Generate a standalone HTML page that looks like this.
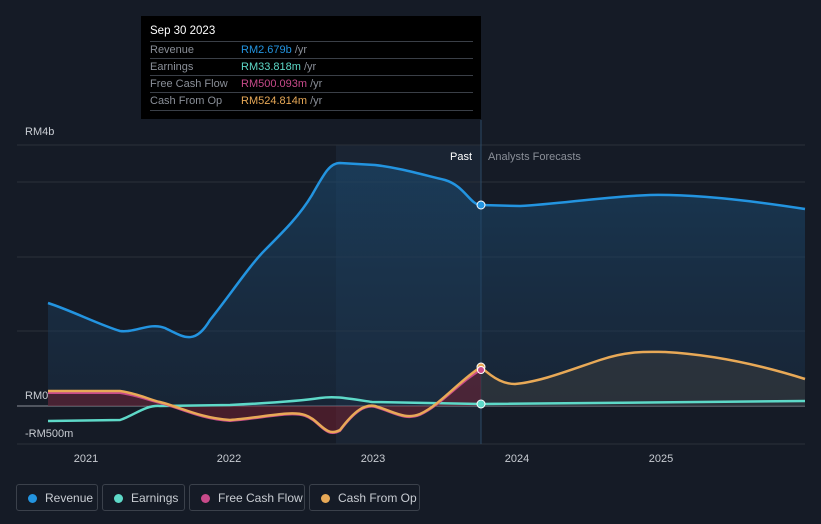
<!DOCTYPE html><html><head><style>
body{margin:0;width:821px;height:524px;background:#151b26;font-family:"Liberation Sans",sans-serif;overflow:hidden;position:relative}
.tt{position:absolute;left:141px;top:16px;width:340px;height:103px;background:#000;color:#fff;font-size:11px}
.tt .h{position:absolute;left:9px;top:9px;font-size:11.5px}
.row{position:absolute;left:9px;width:323px;height:17px;border-top:1px solid #3a3f47;line-height:17px;color:#8a8f98}
.row span{position:absolute;left:91px}
.lg{position:absolute;top:484px;height:27px;border:1px solid #3b414b;border-radius:3px;color:#c8ccd2;font-size:12px;line-height:27px;box-sizing:border-box}
.lg i{position:absolute;left:11px;top:9px;width:9px;height:9px;border-radius:50%}
.lg b{font-weight:normal;position:absolute;left:28px}
</style></head><body>
<svg width="821" height="524" style="position:absolute;left:0;top:0">
<defs><linearGradient id="g" x1="0" y1="0" x2="0" y2="1"><stop offset="0" stop-color="#1b4a70" stop-opacity=".8"/><stop offset="1" stop-color="#1b3550" stop-opacity=".5"/></linearGradient></defs>
<rect x="336" y="145" width="145" height="299" fill="#1a2433"/>
<g stroke="#2a303a" stroke-width="1"><line x1="17" y1="145" x2="805" y2="145"/><line x1="17" y1="182" x2="805" y2="182"/><line x1="17" y1="257" x2="805" y2="257"/><line x1="17" y1="331" x2="805" y2="331"/><line x1="17" y1="444" x2="805" y2="444"/></g>
<line x1="17" y1="406" x2="805" y2="406" stroke="#8a8f98"/>
<line x1="481" y1="120" x2="481" y2="444" stroke="#2c4a66"/>
<path d="M48,303 C70,310 100,325 120,331 C135,333 150,322 165,328 C185,338 195,345 210,320 C230,295 250,265 265,250 C285,230 300,215 312,195 C325,172 330,163 340,163 L375,165 C400,168 420,174 445,180 C465,186 470,205 481,205 L520,206 C560,204 600,197 650,195 C700,194 760,202 805,209 L805,406 L48,406Z" fill="url(#g)" opacity=".75"/>
<path d="M48,303 C70,310 100,325 120,331 C135,333 150,322 165,328 C185,338 195,345 210,320 C230,295 250,265 265,250 C285,230 300,215 312,195 C325,172 330,163 340,163 L375,165 C400,168 420,174 445,180 C465,186 470,205 481,205 L520,206 C560,204 600,197 650,195 C700,194 760,202 805,209" fill="none" stroke="#2394e0" stroke-width="2.5"/>
<path d="M481,367 C495,380 505,384 515,384 C540,382 570,370 600,360 C630,350 650,352 665,352 C720,355 770,368 805,379 L805,406 L481,406Z" fill="#3a3c3e" opacity=".55"/>
<path d="M48,391 L120,391 C140,394 150,400 160,402 C180,407 200,418 230,420 C260,418 290,410 305,415 C320,420 325,438 340,430 C355,410 365,404 375,406 C395,412 405,420 420,414 C440,405 460,380 481,367 L481,406 L48,406Z" fill="#7a2030" opacity=".5"/>
<path d="M48,421 L120,420 C135,415 145,405 160,406 L230,405 C270,403 300,401 320,398 C335,396 345,398 372,402 L481,404 L805,401" fill="none" stroke="#5ed9c8" stroke-width="2.5"/>
<path d="M48,393 L120,393 C140,396 150,401 160,403 C180,408 200,419 230,421 C260,419 290,411 305,416 C320,421 325,439 340,431 C355,411 365,405 375,407 C395,413 405,421 420,415 C440,406 460,382 481,370" fill="none" stroke="#c84a8a" stroke-width="2"/>
<path d="M48,391 L120,391 C140,394 150,400 160,402 C180,407 200,418 230,420 C260,418 290,410 305,415 C320,420 325,438 340,430 C355,410 365,404 375,406 C395,412 405,420 420,414 C440,405 460,380 481,367 C495,380 505,384 515,384 C540,382 570,370 600,360 C630,350 650,352 665,352 C720,355 770,368 805,379" fill="none" stroke="#e8a957" stroke-width="2.5"/>
<circle cx="481" cy="205" r="4" fill="#2394e0" stroke="#fff" stroke-width="1"/>
<circle cx="481" cy="367" r="4" fill="#e8a957" stroke="#fff" stroke-width="1"/>
<circle cx="481" cy="370" r="3.5" fill="#c84a8a" stroke="#fff" stroke-width="1"/>
<circle cx="481" cy="404" r="4" fill="#5ed9c8" stroke="#fff" stroke-width="1"/>
<g font-size="11" fill="#c8ccd2"><text x="25" y="135">RM4b</text><text x="25" y="399">RM0</text><text x="25" y="437">-RM500m</text>
<text x="86" y="462" text-anchor="middle">2021</text><text x="229" y="462" text-anchor="middle">2022</text><text x="373" y="462" text-anchor="middle">2023</text><text x="517" y="462" text-anchor="middle">2024</text><text x="661" y="462" text-anchor="middle">2025</text>
<text x="472" y="160" text-anchor="end" fill="#fff">Past</text><text x="488" y="160" fill="#8a8f98">Analysts Forecasts</text></g>
</svg>
<div class="tt"><div class="h">Sep 30 2023</div>
<div class="row" style="top:25px">Revenue<span style="color:#2394e0">RM2.679b <span style="position:static;color:#8a8f98">/yr</span></span></div>
<div class="row" style="top:42px">Earnings<span style="color:#5ed9c8">RM33.818m <span style="position:static;color:#8a8f98">/yr</span></span></div>
<div class="row" style="top:59px">Free Cash Flow<span style="color:#c84a8a">RM500.093m <span style="position:static;color:#8a8f98">/yr</span></span></div>
<div class="row" style="top:76px">Cash From Op<span style="color:#e8a957">RM524.814m <span style="position:static;color:#8a8f98">/yr</span></span></div>
<div class="row" style="top:94px;height:0"></div>
</div>
<div class="lg" style="left:16px;width:82px"><i style="background:#2394e0"></i><b>Revenue</b></div>
<div class="lg" style="left:102px;width:83px"><i style="background:#5ed9c8"></i><b>Earnings</b></div>
<div class="lg" style="left:189px;width:116px"><i style="background:#c84a8a"></i><b>Free Cash Flow</b></div>
<div class="lg" style="left:309px;width:111px"><i style="background:#e8a957"></i><b>Cash From Op</b></div>
</body></html>
